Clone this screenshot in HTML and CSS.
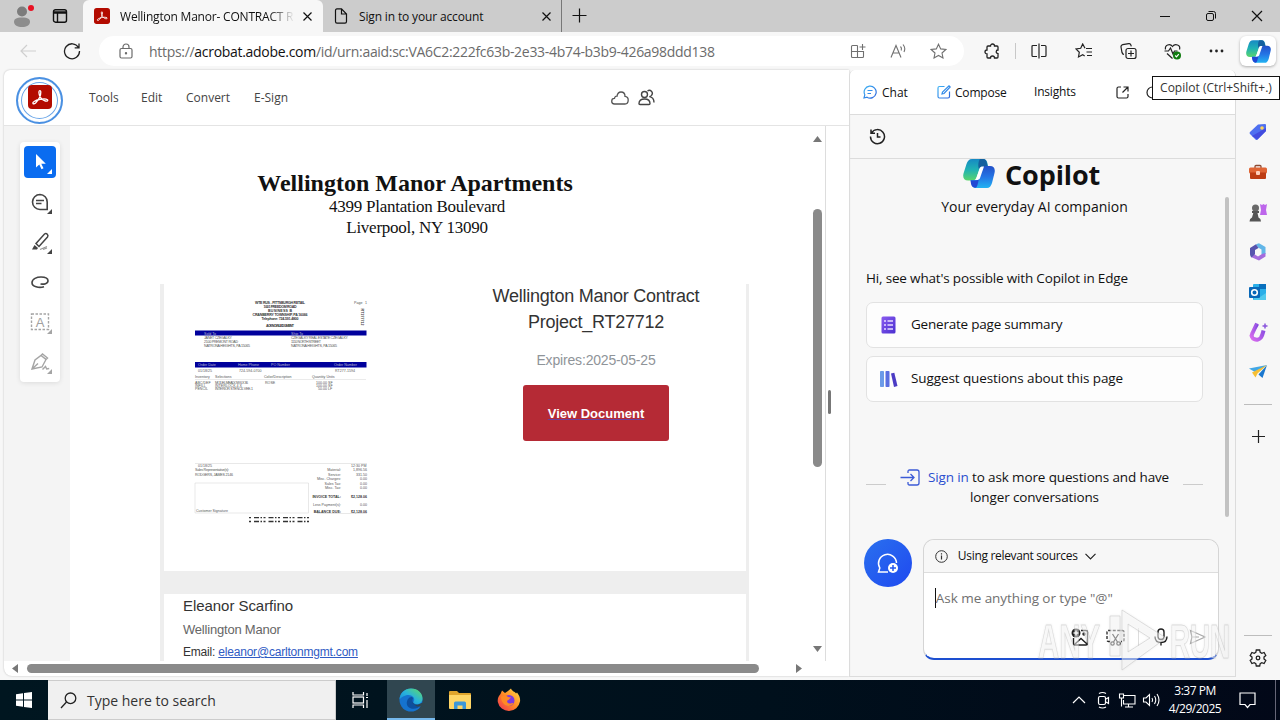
FILE: index.html
```
<!DOCTYPE html>
<html lang="en">

<head>
    <meta charset="UTF-8">
    <meta name="viewport" content="width=device-width, initial-scale=1.0">
    <title>Wellington Manor- CONTRACT</title>
    <link rel="stylesheet" href="styles.css">
</head>

<body>
    <!-- shared gradients and the copilot mark -->
    <svg width="0" height="0" class="defs">
        <defs>
            <linearGradient id="cpA" x1="0" y1="0" x2="0" y2="1">
                <stop offset="0" stop-color="#1689c4" />
                <stop offset=".5" stop-color="#20b2b4" />
                <stop offset="1" stop-color="#5ad56c" />
            </linearGradient>
            <linearGradient id="cpB" x1="0" y1="0" x2="0" y2="1">
                <stop offset="0" stop-color="#2350c8" />
                <stop offset=".5" stop-color="#2475e5" />
                <stop offset="1" stop-color="#23b3f2" />
            </linearGradient>
            <linearGradient id="purple" x1="0" y1="0" x2="1" y2="1">
                <stop offset="0" stop-color="#8b5cf0" />
                <stop offset="1" stop-color="#4a2fd0" />
            </linearGradient>
            <linearGradient id="blue" x1="0" y1="0" x2="1" y2="1">
                <stop offset="0" stop-color="#3fb4f4" />
                <stop offset="1" stop-color="#2b62dc" />
            </linearGradient>
            <linearGradient id="edge" x1="0" y1="1" x2="1" y2="0">
                <stop offset="0" stop-color="#1480d8" />
                <stop offset=".5" stop-color="#28b3dc" />
                <stop offset="1" stop-color="#62dc62" />
            </linearGradient>
            <linearGradient id="fox" x1="1" y1="0" x2="0" y2="1">
                <stop offset="0" stop-color="#ffe04a" />
                <stop offset=".5" stop-color="#ff8a25" />
                <stop offset="1" stop-color="#f02c56" />
            </linearGradient>
            <linearGradient id="pink" x1="0" y1="1" x2="1" y2="0">
                <stop offset="0" stop-color="#d86bee" />
                <stop offset="1" stop-color="#7a48de" />
            </linearGradient>
        </defs>
        <symbol id="copilot" viewBox="0 0 32 29">
            <path d="M9 0h11c3 0 4 2 4.500 4.500L25 8h-5c-2 0-3 1-3.600 3l-3 7.500C12.500 21 11 21.500 9 21.500H5c-4 0-5.500-3-4.500-7L3.500 5C4.500 2 6 0 9 0z" fill="url(#cpA)" />
            <path d="M17 0h3c2.500 0 3.500 2 4 4.500L25 8h-5c-2 0-3 .5-4 2.500-1-3-1-8 1-10.500z" fill="#14609e" />
            <path d="M24 29H13c-3 0-4-2-4.500-4.500L7.500 21h5c2 0 3-1 3.600-3l3-8.500C20 7.500 21.500 7 23.500 7H27c4 0 5.500 3 4.500 7L29 24c-.9 3-2.500 5-5 5z" fill="url(#cpB)" />
            <path d="M7.500 21.500h5c2 0 3-1 3.600-3L15 24c-.6 3-1.500 5-3 4.800-2.500-.3-3.600-2-4-4z" fill="#2048d4" />
            <path d="M13 20.500l3.500-11c.6-1.600 1.500-2 3.500-2h1l-4 11.500c-.6 1.600-1.500 2-4 2z" fill="#fff" />
        </symbol>
        <symbol id="acro" viewBox="0 0 24 24">
            <rect width="24" height="24" rx="4" fill="#b30b00" />
            <path d="M5 18.500c-1-1.500 3-3.300 6-4s7-1 8.500.2c1 1.200-1 2-3 1-3-1.500-5.500-4.500-5.600-8.500 0-2 1.800-2.300 1.900-.2.100 3.500-2.500 8-4.600 10.300-1 1.200-2.600 2-3.200 1.200z" fill="none" stroke="#fff" stroke-width="1.300" />
        </symbol>
    </svg>

    <div class="tabs">
        <div class="tabs-left">
            <svg class="avatar" width="26" height="26" viewBox="0 0 26 26"><circle cx="12" cy="8.500" r="5" fill="#7c7c7c" /><path d="M4 19c0-3 2-4.500 8-4.500s8 1.500 8 4.500c0 3-3.500 5-8 5s-8-2-8-5z" fill="#8d8d8d" /><circle cx="21" cy="5" r="3" fill="#e81123" /></svg>
            <svg width="16" height="16" viewBox="0 0 16 16" fill="none" stroke="#111" stroke-width="1.400"><rect x="1.500" y="1.700" width="13" height="12.500" rx="2" /><path d="M1.500 4.500h13" stroke-width="2.500" /><path d="M5.500 5v9" /></svg>
        </div>
        <div class="tab active">
            <svg width="16" height="16"><use href="#acro" /></svg>
            <span class="tab-name fade">Wellington Manor- CONTRACT R</span>
            <svg width="9" height="9" viewBox="0 0 9 9" stroke="#111" stroke-width="1.200"><path d="M.5.5l8 8M8.500.5l-8 8" /></svg>
        </div>
        <div class="tab">
            <svg width="16" height="16" viewBox="0 0 16 16" fill="none" stroke="#111" stroke-width="1.200"><path d="M4 .8h4.500L13.500 6v7.500c0 1-.5 1.600-1.500 1.600H4c-1 0-1.500-.6-1.500-1.600v-11c0-1 .5-1.700 1.500-1.700zM8.500 1v5h5" /></svg>
            <span class="tab-name second">Sign in to your account</span>
            <svg width="9" height="9" viewBox="0 0 9 9" stroke="#111" stroke-width="1.200"><path d="M.5.5l8 8M8.500.5l-8 8" /></svg>
        </div>
        <div class="new-tab"><svg width="15" height="15" viewBox="0 0 15 15" stroke="#111" stroke-width="1.200"><path d="M7.500.5v14M.5 7.500h14" /></svg></div>
        <div class="win">
            <svg width="46" height="32" viewBox="0 0 46 32" stroke="#111" fill="none"><path d="M18 16.500h10" /></svg>
            <svg width="46" height="32" viewBox="0 0 46 32" stroke="#111" fill="none"><rect x="18.500" y="13.500" width="7" height="7" rx="1.500" /><path d="M20.500 11.500h5q2 0 2 2v5" /></svg>
            <svg width="46" height="32" viewBox="0 0 46 32" stroke="#111" fill="none" stroke-width="1.200"><path d="M18 11l10 10M28 11L18 21" /></svg>
        </div>
    </div>

    <div class="toolbar">
        <div class="cell w56"><svg width="16" height="14" viewBox="0 0 16 14" fill="none" stroke="#cfcfcf" stroke-width="1.200"><path d="M16 7H1M7 1L1 7l6 6" /></svg></div>
        <div class="cell w43"><svg width="18" height="18" viewBox="0 0 18 18" fill="none" stroke="#222" stroke-width="1.300"><path d="M15.500 5.500A7.500 7.500 0 1 0 16.500 9M16 1.500v4.300h-4.300" /></svg></div>
        <div class="address">
            <svg width="14" height="16" viewBox="0 0 14 16" fill="none" stroke="#6b6b6b" stroke-width="1.200"><rect x="1" y="5.500" width="12" height="9.500" rx="1.500" /><path d="M4 5.500V4a3 3 0 0 1 6 0v1.500" /><circle cx="7" cy="10.300" r=".6" fill="#555" /></svg>
            <span class="url">https://<b>acrobat.adobe.com</b>/id/urn:aaid:sc:VA6C2:222fc63b-2e33-4b74-b3b9-426a98ddd138</span>
            <div class="cell w40"><svg width="16" height="16" viewBox="0 0 16 16" fill="none" stroke="#707070" stroke-width="1.100"><path d="M7.500 2.500h-5q-1 0-1 1v10q0 1 1 1h10q1 0 1-1V8.500H1.500M7.500 2.500v12M12.500 1v6M9.500 4h6" /></svg></div>
            <div class="cell w40"><svg width="17" height="16" viewBox="0 0 17 16" fill="none" stroke="#707070" stroke-width="1.100"><path d="M1 14.500L6 2.500l5 12M2.800 10h6.400M10.500 3.500q1.500 1.500.7 4M13 1.500q3 3.500 1 7.500" /></svg></div>
            <div class="cell w40"><svg width="17" height="17" viewBox="0 0 17 17" fill="none" stroke="#707070" stroke-width="1.100"><path d="M8.500 1.200l2.200 4.700 5.100.6-3.800 3.500 1 5-4.500-2.500L4 15l1-5L1.200 6.500l5.100-.6z" /></svg></div>
        </div>
        <div class="cell w44"><svg width="17" height="17" viewBox="0 0 17 17" fill="none" stroke="#222" stroke-width="1.300"><path d="M4 3h2.500a2 2 0 0 1 4 0H13q1 0 1 1v3a1.800 1.800 0 0 0 0 3.600V14q0 1-1 1h-2.500a2 2 0 0 0-4 0H4q-1 0-1-1v-3a2 2 0 1 1 0-4V4q0-1 1-1z" /></svg></div>
        <div class="tb-line"></div>
        <div class="cell w45"><svg width="16" height="16" viewBox="0 0 16 16" fill="none" stroke="#222" stroke-width="1.200"><path d="M8 .5v15M6 2.500H2q-1 0-1 1v9q0 1 1 1h4M10 2.500h4q1 0 1 1v9q0 1-1 1h-4" /></svg></div>
        <div class="cell w45"><svg width="18" height="16" viewBox="0 0 18 16" fill="none" stroke="#222" stroke-width="1.200"><path d="M10 5.300L7.700 1 5.700 5.300 1 6l3.300 3.300L3.500 14l4.200-2.200 2 1.200M11 5.500h6M11.500 9h5.500M12 12.500h5" /></svg></div>
        <div class="cell w45"><svg width="17" height="17" viewBox="0 0 17 17" fill="none" stroke="#222" stroke-width="1.200"><rect x="6" y="5.500" width="10" height="10" rx="2" /><path d="M11 7.500v6M8 10.500h6M4 11.500q-1.500-.3-2-2L1 4q-.2-2 1.700-2.400l6-1q2-.2 2.300 1.700l.3 1" /></svg></div>
        <div class="cell w45"><svg width="18" height="17" viewBox="0 0 18 17" fill="none" stroke="#222" stroke-width="1.200"><path d="M1.500 6.500C.5 2 6 0 8.500 3.500 11 0 17 2 15.500 6.500M.5 8h4l2-3 2.500 6 1.500-3h3M3 10.500l5.500 5" /><circle cx="13" cy="12.500" r="4" fill="#107c10" stroke="none" /><path d="M11.200 12.500l1.300 1.300 2.300-2.600" stroke="#fff" /></svg></div>
        <div class="cell w41"><svg width="16" height="4" fill="#222"><circle cx="3" cy="2" r="1.400" /><circle cx="8.500" cy="2" r="1.400" /><circle cx="14" cy="2" r="1.400" /></svg></div>
        <div class="copilot-btn"><svg width="25" height="23"><use href="#copilot" /></svg></div>
        <div class="tooltip">Copilot (Ctrl+Shift+.)</div>
    </div>

    <div class="main">
        <div class="page">
            <div class="page-head">
                <div class="logo"><svg width="24" height="24"><use href="#acro" /></svg></div>
                <span class="m1">Tools</span>
                <span class="m2">Edit</span>
                <span class="m3">Convert</span>
                <span class="m4">E-Sign</span>
                <div class="share">
                    <svg width="18" height="14" viewBox="0 0 18 14" fill="none" stroke="#555" stroke-width="1.300"><path d="M3.500 13a2.800 2.800 0 0 1 0-5.600C3.800 5.500 5 5 6 5.200 6.500 2 8 1 10 1c2.500 0 4 2 4 4.300 2 .2 3.200 1.700 3.200 3.700 0 2.500-1.200 4-3.200 4z" /></svg>
                    <svg width="17" height="17" viewBox="0 0 17 17" fill="none" stroke="#444" stroke-width="1.400"><circle cx="6.500" cy="5.500" r="3" /><path d="M1 14.500c0-3 2-4.500 5.500-4.500s5.500 1.500 5.500 4.500q0 1-1 1H2q-1 0-1-1zM9.500 2c3-2 6 1.500 4.300 4-.6 1-1.500 1.500-2.500 1.600 3 .4 4.700 2.500 4.700 5.900" /></svg>
                </div>
            </div>
            <div class="viewer">
                <div class="rail">
                    <div class="tools">
                        <div class="tool on"><svg width="32" height="32" viewBox="0 0 32 32"><path d="M12 8v13.500l3.300-3 2.200 4.700 2-1-2.200-4.500h4.500z" fill="#fff" /><path d="M28 23v5h-5z" fill="#fff" /></svg></div>
                        <div class="tool"><svg width="32" height="32" viewBox="0 0 32 32" fill="none" stroke="#444" stroke-width="1.600"><path d="M16 8.500a7.500 7.500 0 1 0 0 15h7.200V16A7.300 7.300 0 0 0 16 8.500zM12 14.500h8M12 17.500h5.500" /><path d="M28 23v5h-5z" fill="#444" stroke="none" /></svg></div>
                        <div class="tool"><svg width="32" height="32" viewBox="0 0 32 32" fill="none" stroke="#444" stroke-width="1.500"><path d="M12 17.500L20.500 8q1.500-1 2.800.2 1.200 1.300.2 2.800L15 20.500z" /><path d="M10.500 19l3.500 3-1 1.500H8z" fill="#444" stroke="none" /><path d="M16 23.500l7-3M19 23.500l4-1.500" stroke="#999" stroke-width="1.300" /><path d="M28 23v5h-5z" fill="#444" stroke="none" /></svg></div>
                        <div class="tool"><svg width="32" height="32" viewBox="0 0 32 32" fill="none" stroke="#444" stroke-width="1.600"><path d="M20 20.800c-5 1.500-12 0-12-4.100 0-4 5-5.700 9-5.700 5 0 7 1.700 7 3.700 0 3-4 3.800-7.500 3.300" /></svg></div>
                        <div class="tool"><svg width="32" height="32" viewBox="0 0 32 32" fill="none" stroke="#a5a5a5" stroke-width="1.400"><rect x="7.500" y="8" width="17" height="15.500" stroke-dasharray="2.500 1.500" /><text x="16" y="20.500" text-anchor="middle" fill="#a0a0a0" stroke="none">A</text><path d="M28 23v5h-5z" fill="#a5a5a5" stroke="none" /></svg></div>
                        <div class="tool"><svg width="32" height="32" viewBox="0 0 32 32" fill="none" stroke="#a5a5a5" stroke-width="1.400"><path d="M8 23l3-9 6-4.500 5 4-4 7.500zM8 23l6-5.500M17 9.500L18.500 8l5 4-1.500 1.500M18.500 23.500l3-3 1.200 2.500 2.500-.5" /><path d="M28 23v5h-5z" fill="#a5a5a5" stroke="none" /></svg></div>
                    </div>
                </div>
                <div class="doc">
                    <div class="letterhead">
                        <h1>Wellington Manor Apartments</h1>
                        <p>4399 Plantation Boulevard</p>
                        <p>Liverpool, NY 13090</p>
                    </div>
                    <div class="sheet">
                        <!-- invoice thumbnail, coordinates are in page pixels from (164,284) -->
                        <svg class="invoice" width="250" height="286" viewBox="164 284 250 286">
                            <g class="bold" text-anchor="middle">
                                <text x="280" y="303.500" textLength="50">WTE RUS - PITTSBURGH RETAIL</text>
                                <text x="280" y="307.500" textLength="33">1001 FREEDOM ROAD</text>
                                <text x="280" y="311.500" textLength="24">BUSINESS B</text>
                                <text x="280" y="315.500" textLength="55">CRANBERRY TOWNSHIP, PA 16066</text>
                                <text x="280" y="319.500" textLength="37">Telephone: 724-591-4800</text>
                                <text x="280" y="326.500" textLength="28">ACKNOWLEDGMENT</text>
                                <text transform="translate(361 317) rotate(90)">RT277712</text>
                            </g>
                            <text x="354" y="304">Page</text><text x="365" y="304">1</text>
                            <path d="M195 330.500h171.500v5H195zM195 362h171.500v5.500H195z" fill="#00009c" />
                            <g class="light">
                                <text x="204" y="334.500">Sold To</text><text x="291" y="334.500">Ship To</text>
                                <text x="198" y="366.300">Order Date</text><text x="238" y="366.300">Home Phone</text><text x="271" y="366.300">PO Number</text><text x="334" y="366.300">Order Number</text>
                            </g>
                            <text x="204" y="339" textLength="28">JANET CZEGALKY</text>
                            <text x="204" y="342.500" textLength="34">2100 PREMONT ROAD</text>
                            <text x="204" y="346.500" textLength="46">NATRONA HEIGHTS, PA 15065</text>
                            <text x="291" y="339" textLength="57">CZEGALKY REAL ESTATE CZEGALKY</text>
                            <text x="291" y="342.500" textLength="30">1110 NORTH STREET</text>
                            <text x="291" y="346.500" textLength="46">NATRONA HEIGHTS, PA 15065</text>
                            <text x="198" y="371.500">01/18/25</text><text x="239" y="371.500">724-594-0700</text><text x="335" y="371.500">RT277-1594</text>
                            <text x="195" y="378">Inventory</text><text x="215" y="378">Selections</text><text x="264" y="378">Color/Description</text><text x="312" y="378">Quantity Units</text>
                            <path d="M195 379.500h171" stroke="#ccc" stroke-width=".4" />
                            <text x="195" y="383.500">ABC/DEF</text><text x="215" y="383.500" textLength="33">MODEL MEADOW 6 X 36</text><text x="265" y="383.500">ROSE</text><text x="316" y="383.500">100.00 SF</text>
                            <text x="195" y="387">INFILL</text><text x="215" y="387">INTERLOCK 4 X</text><text x="316" y="387">100.00 SF</text>
                            <text x="195" y="390">PENCIL</text><text x="215" y="390" textLength="38">INTERIOR STENCIL VEE-1</text><text x="318" y="390">50.00 LF</text>
                            <path d="M195 463.500h172M195 483h113.500v30H195zM317 513.500h50" fill="none" stroke="#d0d0d0" stroke-width=".5" />
                            <text x="198" y="466.500">01/18/25</text><text x="351" y="466.500">12:30 PM</text>
                            <text x="195" y="471" textLength="34">Sales Representative(s):</text>
                            <text x="195" y="475.800" textLength="38">RODGERS, JAMES 2146</text>
                            <g text-anchor="end">
                                <text x="341" y="471">Material:</text><text x="367" y="471">1,896.56</text>
                                <text x="341" y="475.500">Service:</text><text x="367" y="475.500">331.50</text>
                                <text x="341" y="480">Misc. Charges:</text><text x="367" y="480">0.00</text>
                                <text x="341" y="484.500">Sales Tax:</text><text x="367" y="484.500">0.00</text>
                                <text x="341" y="489">Misc. Tax:</text><text x="367" y="489">0.00</text>
                                <text x="341" y="505.500">Less Payment(s):</text><text x="367" y="505.500">0.00</text>
                                <g class="bold"><text x="341" y="498">INVOICE TOTAL:</text><text x="367" y="498">$2,128.06</text><text x="341" y="512.500">BALANCE DUE:</text><text x="367" y="512.500">$2,128.06</text></g>
                            </g>
                            <text x="196" y="511.500">Customer Signature</text>
                            <path d="M249 517.700h61M249 521.500h61" stroke="#333" stroke-width="1.300" stroke-dasharray="2 3 5 1.500 1.500 1.500" />
                        </svg>
                        <div class="offer">
                            <h2>Wellington Manor Contract Project_RT27712</h2>
                            <p>Expires:2025-05-25</p>
                            <a>View Document</a>
                        </div>
                    </div>
                    <div class="contact">
                        <p class="name">Eleanor Scarfino</p>
                        <p class="org">Wellington Manor</p>
                        <p class="mail">Email: <a>eleanor@carltonmgmt.com</a></p>
                    </div>
                </div>
                <div class="vscroll">
                    <svg width="9" height="6"><path d="M0 6L4.500 0 9 6z" fill="#777" /></svg>
                    <div class="vthumb"></div>
                    <svg width="9" height="6"><path d="M0 0l4.500 6L9 0z" fill="#777" /></svg>
                </div>
                <div class="grip"></div>
            </div>
            <div class="hscroll">
                <svg width="6" height="9"><path d="M6 0L0 4.500 6 9z" fill="#777" /></svg>
                <div class="hthumb"></div>
                <svg width="6" height="9"><path d="M0 0l6 4.500L0 9z" fill="#777" /></svg>
            </div>
        </div>

        <div class="panel">
            <div class="panel-tabs">
                <svg width="14" height="14" viewBox="0 0 14 14" fill="none" stroke="url(#blue)" stroke-width="1.200"><path d="M1 13l.8-3.200A6 6 0 1 1 4 12.200zM4.500 5.500h5M4.500 8.500h3.500" /></svg>
                <span class="p1">Chat</span>
                <svg width="14" height="14" viewBox="0 0 14 14" fill="none" stroke="url(#blue)" stroke-width="1.200"><path d="M7.500 1.500h-5q-1.500 0-1.500 1.500v8.500q0 1.500 1.500 1.500H11q1.500 0 1.500-1.500v-5M5 9l.5-2L12 .8l1.200 1.200L7 8.500z" /></svg>
                <span class="p2">Compose</span>
                <span class="p3">Insights</span>
                <svg class="p4" width="13" height="13" viewBox="0 0 13 13" fill="none" stroke="#222" stroke-width="1.200"><path d="M5 1H2.500Q1 1 1 2.500v8Q1 12 2.500 12h8q1.500 0 1.500-1.500V8M7.500 1H12v4.500M12 1L6.500 6.500" /></svg>
                <svg class="p5" width="13" height="13" viewBox="0 0 13 13" fill="none" stroke="#222" stroke-width="1.200"><circle cx="6.500" cy="6.500" r="5.500" /></svg>
            </div>
            <div class="history"><svg width="17" height="17" viewBox="0 0 17 17" fill="none" stroke="#222" stroke-width="1.500"><path d="M2.500 5A7 7 0 1 1 1.500 8.500M2 1.500V5.300h4M8.500 5v4h3" /></svg></div>
            <div class="panel-body">
                <div class="brand"><svg width="32" height="29"><use href="#copilot" /></svg><b>Copilot</b></div>
                <p class="slogan">Your everyday AI companion</p>
                <p class="hi">Hi, see what's possible with Copilot in Edge</p>
                <div class="card">
                    <svg width="20" height="20" viewBox="0 0 20 20"><rect x="2.500" y="1.500" width="14" height="17" rx="1.500" fill="url(#purple)" /><path d="M5 6h2M8.500 6H14M5 10h2M8.500 10H14M5 14h2M8.500 14H14" stroke="#e6dcff" stroke-width="1.400" /></svg>
                    <span class="c1">Generate page summary</span>
                </div>
                <div class="card">
                    <svg width="20" height="20" viewBox="0 0 20 20"><rect x="1" y="2" width="4" height="16" rx=".8" fill="#6b9ae8" /><rect x="6.500" y="2" width="4" height="16" rx=".8" fill="#5a6ee0" /><path d="M12 4.500l3.300-.8L18.500 17l-3.500 1z" fill="#4b3bc4" /></svg>
                    <span class="c2">Suggest questions about this page</span>
                </div>
                <div class="signin">
                    <i></i>
                    <p><svg width="20" height="17" viewBox="0 0 20 17" fill="none" stroke="#3c5bd6" stroke-width="1.300"><path d="M8 4V2.500Q8 1 9.500 1H17q2 0 2 2v11q0 2-2 2H9.500Q8 16 8 14.500V13M.5 8.500H14M10.500 5l3.500 3.500L10.500 12" /></svg><a>Sign in</a> to ask more questions and have<br><span>longer conversations</span></p>
                    <i></i>
                </div>
                <div class="ask">
                    <div class="new-chat"><svg width="24" height="24" viewBox="0 0 24 24" fill="none" stroke="#fff" stroke-width="1.500"><path d="M12 21H2.500l1.300-4A9 9 0 1 1 20.500 12" /><circle cx="17" cy="17" r="5" fill="#fff" stroke="none" /><path d="M17 14v6M14 17h6" stroke="#2458ee" /></svg></div>
                    <div class="box">
                        <div class="source">
                            <svg width="13" height="13" viewBox="0 0 13 13" fill="none" stroke="#333"><circle cx="6.500" cy="6.500" r="5.800" /><path d="M6.500 5.500v4M6.500 3.300v1.200" stroke-width="1.200" /></svg>
                            <span>Using relevant sources</span>
                            <svg width="11" height="7" viewBox="0 0 11 7" fill="none" stroke="#222" stroke-width="1.200"><path d="M.5.800l5 5 5-5" /></svg>
                        </div>
                        <p class="placeholder">Ask me anything or type "@"</p>
                        <div class="box-icons">
                            <svg width="18" height="18" viewBox="0 0 18 18" fill="none" stroke="#222" stroke-width="1.400"><path d="M10 2.500h5q1.500 0 1.500 1.500v11.500q0 1.500-1.500 1.500H4q-1.500 0-1.500-1.500V10M4 16l6-5.500 6 5.500" /><circle cx="5" cy="5" r="4.500" fill="#222" stroke="none" /><path d="M5 2.500v5M2.500 5h5" stroke="#fff" /><circle cx="13" cy="6" r="1" /></svg>
                            <svg class="b2" width="19" height="18" viewBox="0 0 19 18" fill="none" stroke="#222" stroke-width="1.300"><path d="M4 13.500H2.500Q1 13.500 1 12V4q0-1.500 1.500-1.500h14Q18 2.500 18 4v8q0 1.500-1.500 1.500H15" stroke-dasharray="3 1.500" /><path d="M6.500 6l5 8M12.500 6l-5 8" /><circle cx="6.500" cy="15.500" r="1.700" /><circle cx="12.500" cy="15.500" r="1.700" /></svg>
                            <i></i>
                            <svg class="b3" width="14" height="18" viewBox="0 0 14 18" fill="none" stroke="#222" stroke-width="1.400"><rect x="4" y="1" width="6" height="10.500" rx="3" /><path d="M1 8.500q0 6 6 6t6-6M7 14.500v3" /></svg>
                            <svg class="b4" width="17" height="16" viewBox="0 0 17 16" fill="none" stroke="#aaa" stroke-width="1.200"><path d="M1.500 1.500L16 8 1.500 14.500 3 8zM3 8h7" /></svg>
                        </div>
                    </div>
                </div>
                <div class="panel-thumb"></div>
            </div>
        </div>

        <div class="side">
            <svg width="18" height="18" viewBox="0 0 18 18"><path d="M9 1.500L16 1q1 0 1 1v6L8.500 16.500q-1 1-2 0L1 11q-1-1 0-2z" fill="#4e6ff0" /><path d="M3 13l5.500 3.500L17 8v-3z" fill="#424cdf" /><circle cx="13" cy="5" r="1.800" fill="#ffd35a" /></svg>
            <svg width="18" height="18" viewBox="0 0 18 18"><path d="M6 5V3.500Q6 2.500 7 2.500h4q1 0 1 1V5" fill="none" stroke="#8f4a32" stroke-width="1.300" /><rect y="4.500" width="18" height="6" rx="1.500" fill="#df6535" /><path d="M1 9.500h16V15q0 1-1 1H2q-1 0-1-1z" fill="#bd3d14" /><rect x="7" y="8" width="4" height="4" rx="1" fill="#ffd0bd" /></svg>
            <svg width="20" height="20" viewBox="0 0 20 20"><path d="M12 2l2 1 1.500-1L17 3l2-1-1 6 1 5h-7l1-5z" fill="#bd66eb" /><circle cx="7.500" cy="6" r="3.500" fill="#696969" /><path d="M4 9h7v2H9.500l1 4.500q2.500 1 2.500 4H1.500q0-3 2.500-4l1.300-4.500H4z" fill="#555" /></svg>
            <svg width="18" height="18" viewBox="0 0 18 18"><path d="M7 1.200L10 .3 16.500 4v7l-4 .5V6.500L9 4.500z" fill="#62b6e8" /><path d="M16.500 10v3.500L10 17.500 2 14l3-3 4 2.500 4-2.500z" fill="#a46cdd" /><path d="M7 1.200L9.500 5 6 7v4l-3.500 3.500Q1 13 1 11V5z" fill="#5754ae" /></svg>
            <svg width="18" height="18" viewBox="0 0 18 18"><rect x="4" y="1" width="13" height="16" rx="1" fill="#2aaee8" /><path d="M10 1h7v5h-7z" fill="#0a70bd" /><path d="M5 10l6 4 6-4v7H5z" fill="#51c9ed" /><rect x="0" y="4" width="11" height="11" rx="1" fill="#0968b8" /><circle cx="5.500" cy="9.500" r="2.800" fill="none" stroke="#fff" stroke-width="1.600" /></svg>
            <svg width="20" height="20" viewBox="0 0 20 20" fill="none" stroke="url(#pink)"><path d="M9 1.500L4.500 11C1 17 10 20 13 15.500c1.500-2.500 2-5 2.500-7" stroke-width="4" /><path d="M2 14.500L10 3" stroke-width="1.500" /><path d="M17 1.500v5M14.500 4h5" stroke="#8a56dc" stroke-width="1.500" /></svg>
            <svg width="18" height="18" viewBox="0 0 18 18"><path d="M0 5.500L18 2 7.500 10z" fill="#42a7e5" /><path d="M18 2l-4.500 13-4-3.500z" fill="#1b78cf" /><path d="M18 2L3 9.500l3.500 5 2-4z" fill="#f6bf35" /></svg>
            <hr>
            <svg class="plus" width="13" height="13" viewBox="0 0 13 13" stroke="#222" stroke-width="1.200"><path d="M6.500 0v13M0 6.500h13" /></svg>
            <hr class="low">
            <svg class="gear" width="18" height="18" viewBox="0 0 18 18" fill="none" stroke="#222" stroke-width="1.300"><path d="M7.300 1h3.400l.5 2.400 1.600.9 2.300-.8 1.700 3-1.800 1.600v1.800l1.800 1.600-1.700 3-2.300-.8-1.600.9-.5 2.400H7.300l-.5-2.400-1.600-.9-2.300.8-1.700-3L3 9.900V8.100L1.200 6.500l1.700-3 2.300.8 1.600-.9z" /><circle cx="9" cy="9" r="1.800" /></svg>
        </div>

        <svg class="mark" width="210" height="68" viewBox="0 0 210 68">
            <g fill="#fff" fill-opacity=".5" stroke="#bbb" stroke-opacity=".45">
                <text x="2" y="51" textLength="62" lengthAdjust="spacingAndGlyphs">ANY</text>
                <text x="134" y="51" textLength="60" lengthAdjust="spacingAndGlyphs">RUN</text>
                <path d="M74 9h10v40H74zM86 3l44 28-44 32zM92 17v28l22-14z" fill-rule="evenodd" />
            </g>
        </svg>
    </div>

    <div class="taskbar">
        <div class="start"><svg width="16" height="16" viewBox="0 0 16 16" fill="#fff"><path d="M0 2.200L7 1.200v6.300H0zM8 1l8-1v7.500H8zM0 8.500h7v6.300l-7-1zM8 8.500h8V16l-8-1z" /></svg></div>
        <div class="search">
            <svg width="17" height="17" viewBox="0 0 17 17" fill="none" stroke="#222" stroke-width="1.300"><circle cx="10.500" cy="6.300" r="5.300" /><path d="M6.500 10L1 16" /></svg>
            <span>Type here to search</span>
        </div>
        <div class="app view"><svg width="17" height="16" viewBox="0 0 17 16" fill="none" stroke="#fff" stroke-width="1.200"><path d="M1 0v3h10.500V0M1 16v-3h10.500v3" /><rect x="1" y="5" width="10.500" height="6" /><path d="M15 1v3M15 8v8M14 5.500h2" /></svg></div>
        <div class="app open"><svg width="24" height="24" viewBox="0 0 24 24"><circle cx="12" cy="12" r="11.500" fill="#1573cf" /><path d="M.5 11.500C1 4.500 6 .5 12 .5c7 0 12 5 11.500 10.500-.3 4-4 5.500-7 5.500-2 0-3-1-2-2.500 2.500-4-1.500-7-5-7-4 0-7.500 2.500-9 4.500z" fill="url(#edge)" /><path d="M14 10.500c-2 4.500 3 7.500 8.200 5.500-2.500 5-8.500 6-12.200 3.500-3.500-2.500-2.500-8 .5-10 2-1 3.500-.5 3.500 1z" fill="#0d4f9e" /><path d="M13.800 14.200c-.6 1.500.6 2.700 3 2.500 2.500 0 4.200-.8 5.500-1.800l1.700 0-1 3c-3.500 1.500-8.700-.2-9.200-3.700z" fill="#304650" /></svg></div>
        <div class="app"><svg width="22" height="18" viewBox="0 0 22 18"><path d="M0 1q0-1 1-1h7l2 2h11q1 0 1 1v14H0z" fill="#e0a52c" /><path d="M0 4h22v13q0 1-1 1H1q-1 0-1-1z" fill="#ffd666" /><path d="M5 18v-6q0-1.500 1.500-1.500h9Q17 10.500 17 12v6h-3.500v-3.500h-5V18z" fill="#3d97d8" /></svg></div>
        <div class="app"><svg width="24" height="24" viewBox="0 0 24 24"><path d="M3.500 6L5 2.500 8 5l3-2 3-2.500c1 3 4 3 5 5l1-1c2.500 3 3.500 6 3 9A11.300 11.300 0 0 1 .8 14c-.4-3 .7-6 2.700-8z" fill="url(#fox)" /><circle cx="12" cy="12.500" r="5.500" fill="#7b3ae0" /><path d="M4 9c3-2 6-1 7 0l3 .5-2.500 2.500c-2 .5-2 3 1 3.500 2 .3 3-1 4-.5-1 3-6 4-8.500 2S4 12 4 9z" fill="#ff8a25" /></svg></div>
        <div class="tray">
            <svg width="24" height="20" viewBox="0 0 24 20" fill="none" stroke="#fff" stroke-width="1.200"><path d="M6 13l6-6 6 6" /></svg>
            <svg width="24" height="20" viewBox="0 0 24 20" fill="none" stroke="#fff" stroke-width="1.200"><rect x="7.500" y="6.500" width="7" height="8" rx="1.500" /><path d="M15 9l2.500-1.500v6L15 12M8 3.500q3.500-2 7 0M8 17q3.500 2 7 0" /></svg>
            <svg width="24" height="20" viewBox="0 0 24 20" fill="none" stroke="#fff" stroke-width="1.100"><path d="M9 5.500h11v8.500H8.500V10M13.500 14v3M10 17h8M4.500 4h4v4h-4zM6.500 8v8.500" /></svg>
            <svg width="24" height="20" viewBox="0 0 24 20" fill="none" stroke="#fff" stroke-width="1.100"><path d="M4.500 8h2.500l3.500-3.500v11L7 12H4.500zM13 8q1.300 2 0 4M15.500 6q2.500 4 0 8M18 4q4 6 0 12" /></svg>
            <div class="clock">3:37 PM<br>4/29/2025</div>
            <svg class="note" width="17" height="17" viewBox="0 0 17 17" fill="none" stroke="#fff" stroke-width="1.200"><path d="M1 1h15v11.500h-5L8.500 15.500 6 12.500H1z" /></svg>
        </div>
    </div>
</body>

</html>
```
FILE: styles.css
```
body {
    margin: 0;
    width: 1280px;
    height: 720px;
    overflow: hidden;
    display: flex;
    flex-direction: column;
    background-color: #f7f7f7;
    font-family: "Open Sans", "Noto Sans", sans-serif;
    color: #111;
}

h1, h2, p {
    margin: 0;
    font-weight: normal;
}

svg {
    display: block;
    flex: none;
}

span, a {
    white-space: nowrap;
}

.defs {
    position: absolute;
}

/* tabs */
.tabs {
    height: 32px;
    flex: none;
    display: flex;
    background-color: #ccc;
}

.tabs-left {
    width: 83px;
    display: flex;
    align-items: center;
    box-sizing: border-box;
    padding-left: 10px;
}

.avatar {
    margin-right: 16px;
}

.tab {
    width: 239px;
    display: flex;
    align-items: center;
    box-sizing: border-box;
    padding: 0 10px 0 10px;
    border-right: 1px solid #777;
    font-size: 12px;
}

.tab.active {
    width: 240px;
    padding: 0 11px;
    background-color: #f7f7f7;
    border-radius: 6px 6px 0 0;
    border-right: 0;
}

.tab-name {
    flex: 1;
    overflow: hidden;
    margin: 0 8px 0 10px;
    letter-spacing: -0.2px;
}

.tab-name.second {
    letter-spacing: -0.15px;
}

.fade {
    -webkit-mask-image: linear-gradient(to right, #000 85%, transparent);
    mask-image: linear-gradient(to right, #000 85%, transparent);
}

.new-tab {
    padding: 8px 0 0 10px;
}

.win {
    margin-left: auto;
    display: flex;
}

/* toolbar */
.toolbar {
    height: 38px;
    flex: none;
    display: flex;
    align-items: center;
    position: relative;
    z-index: 2;
}

.cell {
    flex: none;
    display: flex;
    align-items: center;
    justify-content: center;
}

.w56 { width: 56px; }
.w43 { width: 31px; margin-right: 12px; }
.w40 { width: 40px; }
.w41 { width: 41px; }
.w44 { width: 44px; }
.w45 { width: 44.500px; }

.address {
    width: 865px;
    height: 30px;
    box-sizing: border-box;
    padding: 0 6px 0 20px;
    display: flex;
    align-items: center;
    border-radius: 15px;
    background-color: #fff;
    margin-right: 6px;
}

.url {
    flex: 1;
    margin-left: 16px;
    font-size: 14px;
    letter-spacing: -0.300px;
    color: #6b6b6b;
}

.url b {
    font-weight: normal;
    color: #111;
}

.tb-line {
    width: 1px;
    height: 16px;
    margin: 0 1px;
    background-color: #c8c8c8;
}

.copilot-btn {
    width: 36px;
    height: 30px;
    margin-left: auto;
    margin-right: 4px;
    display: flex;
    align-items: center;
    justify-content: center;
    border-radius: 6px;
    background-color: #fff;
    box-shadow: 0 1px 3px rgba(0, 0, 0, .3);
}

.tooltip {
    position: absolute;
    right: 0;
    top: 44px;
    width: 128px;
    height: 24px;
    box-sizing: border-box;
    border: 1px solid #111;
    background-color: #fff;
    font-size: 12px;
    line-height: 22px;
    text-align: center;
    white-space: nowrap;
    color: #333;
    letter-spacing: 0;
}

/* page */
.main {
    height: 610px;
    flex: none;
    display: flex;
    position: relative;
}

.page {
    width: 845px;
    height: 606px;
    margin-left: 4px;
    display: flex;
    flex-direction: column;
    background-color: #fff;
    border-radius: 6px 0 0 8px;
    box-shadow: 0 0 2px rgba(0, 0, 0, .25);
    overflow: hidden;
}

.page-head {
    height: 55px;
    flex: none;
    display: flex;
    align-items: center;
    border-bottom: 1px solid #e4e4e4;
    font-size: 12px;
    color: #444;
}

.logo {
    width: 47px;
    height: 47px;
    margin: 6px 0 0 12px;
    box-sizing: border-box;
    border: 2px solid #4a90e2;
    border-radius: 50%;
    display: flex;
    justify-content: center;
    padding-top: 6px;
    box-shadow: inset 0 0 0 3px #fff, inset 0 0 0 4px #6ba6e8;
}

.m1 { width: 52px; margin-left: 26px; }
.m2 { width: 45px; }
.m3 { width: 68px; }

.share {
    display: flex;
    align-items: center;
    gap: 9px;
    margin-left: auto;
    margin-right: 194px;
}

.viewer {
    height: 535px;
    flex: none;
    display: flex;
}

.rail {
    width: 66px;
    flex: none;
    background-color: #f4f4f4;
}

.tools {
    width: 32px;
    height: 232px;
    margin: 16px 0 0 16px;
    padding: 4px;
    display: flex;
    flex-direction: column;
    gap: 8px;
    border-radius: 4px;
    background-color: #fff;
    box-shadow: 0 1px 5px rgba(0, 0, 0, .1);
}

.tool.on {
    border-radius: 4px;
    background-color: #0a6cf0;
}

.tool text {
    font: 13px "Liberation Sans", sans-serif;
}

.doc {
    width: 740px;
    flex: none;
    overflow: hidden;
    font-family: "Liberation Sans", Arial, sans-serif;
}

.letterhead {
    width: 588px;
    height: 114px;
    padding-top: 44px;
    margin-left: 51px;
    text-align: center;
    font-family: "Liberation Serif", "Times New Roman", serif;
}

.letterhead h1 {
    font-size: 24px;
    line-height: 27px;
    font-weight: bold;
}

.letterhead p {
    margin-left: 4px;
    font-size: 17px;
    line-height: 20.500px;
    letter-spacing: -0.25px;
}

.sheet {
    width: 582px;
    height: 287px;
    margin-left: 90px;
    border-left: 4px solid #eee;
    border-right: 3px solid #eee;
    display: flex;
}

.invoice {
    font-size: 3.600px;
    fill: #555;
}

.bold {
    font-weight: bold;
    fill: #333;
}

.light {
    fill: #bbc;
}

.offer {
    width: 230px;
    margin-left: 67px;
    margin-top: -1px;
    text-align: center;
}

.offer h2 {
    font-size: 18px;
    line-height: 26px;
    letter-spacing: -0.24px;
    color: #333;
}

.offer p {
    margin-top: 16px;
    font-size: 14px;
    line-height: 18px;
    letter-spacing: -0.17px;
    color: #8f9499;
}

.offer a {
    display: block;
    width: 146px;
    height: 56px;
    margin: 16px auto 0;
    border-radius: 3px;
    background-color: #b52a35;
    color: #fff;
    font-size: 13px;
    font-weight: bold;
    line-height: 57px;
    text-decoration: underline;
    text-decoration-color: #6a3f9c;
}

.contact {
    width: 562px;
    height: 70px;
    margin-left: 90px;
    padding-left: 20px;
    border: solid #eee;
    border-width: 23px 3px 0 4px;
    color: #333;
}

.name {
    margin-left: -1px;
    font-size: 15px;
    line-height: 24px;
    letter-spacing: -0.05px;
}

.org {
    margin-left: -1px;
    font-size: 13px;
    line-height: 24px;
    letter-spacing: -0.2px;
    color: #666;
}

.mail {
    margin-left: -1px;
    font-size: 12px;
    line-height: 20px;
    letter-spacing: -0.2px;
}

.mail a {
    color: #2f5bc4;
    text-decoration: underline;
}

.vscroll {
    width: 16px;
    flex: none;
    display: flex;
    flex-direction: column;
    align-items: center;
    border-right: 1px solid #ddd;
    padding: 10px 0 9px;
    box-sizing: border-box;
}

.vthumb {
    width: 9px;
    height: 258px;
    margin: 67px 0 auto;
    border-radius: 5px;
    background-color: #8a8a8a;
}

.grip {
    width: 3px;
    height: 24px;
    margin: 264px 0 0 2px;
    border-radius: 2px;
    background-color: #777;
}

.hscroll {
    height: 15px;
    display: flex;
    align-items: center;
    padding-left: 8px;
}

.hthumb {
    width: 732px;
    height: 9px;
    margin: 0 37px 0 9px;
    border-radius: 5px;
    background-color: #8a8a8a;
}

/* copilot panel */
.panel {
    width: 385px;
    height: 606px;
    display: flex;
    flex-direction: column;
    border: 1px solid #dcdcdc;
    border-width: 0 1px 1px;
    border-radius: 6px 6px 0 0;
    box-sizing: content-box;
    overflow: hidden;
}

.panel-tabs {
    height: 44px;
    flex: none;
    display: flex;
    align-items: center;
    padding-left: 13px;
    background-color: #fff;
    border-bottom: 1px solid #dcdcdc;
    font-size: 12px;
}

.p1 { width: 55px; margin-left: 5px; }
.p2 { width: 79px; margin-left: 4px; letter-spacing: -0.2px; }
.p3 { width: 82px; margin-top: -2px; letter-spacing: -0.2px; }
.p5 { margin-left: 17px; }

.history {
    height: 43px;
    flex: none;
    display: flex;
    align-items: center;
    padding-left: 19px;
    border-bottom: 1px solid #dcdcdc;
}

.panel-body {
    flex: 1;
    position: relative;
    padding: 0 16px;
}

.brand {
    display: flex;
    margin-left: 97px;
    gap: 10px;
    font-size: 27px;
    line-height: 32px;
    height: 38px;
    letter-spacing: -0.1px;
}

.slogan {
    width: 337px;
    text-align: center;
    font-size: 14px;
    line-height: 20px;
}

.hi {
    margin: 51px 0 14px;
    font-size: 13.500px;
    line-height: 20px;
    letter-spacing: -0.17px;
}

.card {
    width: 335px;
    height: 44px;
    display: flex;
    align-items: center;
    gap: 12px;
    margin-bottom: 8px;
    border: 1px solid #e2e2e2;
    border-radius: 7px;
    background-color: #fdfdfd;
    font-size: 13.500px;
}

.card svg {
    margin-left: 12px;
}

.card span {
    margin-top: -2px;
}

.c1 { letter-spacing: -0.22px; }
.c2 { letter-spacing: -0.1px; }

.signin {
    width: 337px;
    display: flex;
    margin-top: 65px;
    justify-content: space-between;
}

.signin i {
    width: 20px;
    height: 1px;
    margin-top: 17px;
    background-color: #ccc;
}

.signin p {
    font-size: 13.500px;
    line-height: 20px;
    letter-spacing: -0.13px;
    text-align: center;
    white-space: nowrap;
}

.signin svg {
    display: inline-block;
    vertical-align: -4px;
    margin-right: 8px;
}

.signin a {
    color: #2b4fcf;
}

.ask {
    display: flex;
    margin: 32px 0 0 -2px;
    gap: 11px;
}

.new-chat {
    width: 48px;
    height: 48px;
    display: flex;
    align-items: center;
    justify-content: center;
    border-radius: 50%;
    background-image: linear-gradient(to bottom right, #2a70ee, #1f49f0);
}

.box {
    width: 295px;
    height: 118px;
    border: 1px solid #d5d5d5;
    border-bottom: 2px solid #1d4fd0;
    border-radius: 11px;
    background-color: #fff;
    overflow: hidden;
}

.source {
    height: 32px;
    display: flex;
    align-items: center;
    padding-left: 11px;
    gap: 10px;
    border-bottom: 1px solid #ddd;
    background-color: #f7f7f7;
    font-size: 12px;
    letter-spacing: -0.32px;
}

.source span {
    margin-top: -2px;
}

.source svg:last-child {
    margin-left: -3px;
}

.placeholder {
    margin: 15px 0 0 11px;
    border-left: 1px solid #111;
    font-size: 13.500px;
    line-height: 20px;
    letter-spacing: -0.05px;
    color: #707070;
}

.box-icons {
    display: flex;
    align-items: center;
    margin: 20px 0 0 147px;
}

.box-icons i {
    width: 1px;
    height: 18px;
    margin-left: 13px;
    background-color: #ddd;
}

.b2 { margin-left: 17px; }
.b3 { margin-left: 15px; }
.b4 { margin-left: 21px; }

.panel-thumb {
    position: absolute;
    right: 6px;
    top: 38px;
    width: 4px;
    height: 320px;
    border-radius: 2px;
    background-color: #c2c2c2;
}

/* edge sidebar */
.side {
    flex: 1;
    display: flex;
    flex-direction: column;
    align-items: center;
    padding-top: 42px;
    box-sizing: border-box;
}

.side svg {
    height: 40px;
}

.side hr {
    width: 28px;
    height: 1px;
    margin: 12px 0 25px;
    border: 0;
    background-color: #bdbdbd;
}

.side .plus {
    height: 13px;
}

.side .low {
    margin: 192px 0 13px;
}

.side .gear {
    height: 18px;
}

.mark {
    position: absolute;
    left: 1036px;
    top: 537px;
    overflow: visible;
    font: bold 49px "Liberation Sans", Arial, sans-serif;
    filter: drop-shadow(0 0 1px rgba(0, 0, 0, .12));
}

/* taskbar */
.taskbar {
    height: 40px;
    flex: none;
    display: flex;
    background-image: linear-gradient(to right, #001620, #00101c 60%, #020818);
    color: #fff;
}

.start,
.app {
    width: 48px;
    display: flex;
    align-items: center;
    justify-content: center;
}

.app {
    margin-left: 1px;
}

.view {
    width: 47px;
    margin-right: 1px;
}

.open {
    margin-left: 2px;
    box-sizing: border-box;
    border-bottom: 2px solid #76b9ed;
    background-color: #304650;
    padding-top: 2px;
}

.search {
    width: 288px;
    box-sizing: border-box;
    display: flex;
    align-items: center;
    padding-left: 12px;
    gap: 10px;
    border: 1px solid #ccc;
    border-left: 0;
    background-color: #f0f0f0;
    color: #333;
    font-size: 14px;
}

.tray {
    margin-left: auto;
    width: 209px;
    display: flex;
    align-items: center;
    border-right: 1px solid #667;
    margin-right: 4px;
    box-sizing: border-box;
}

.clock {
    width: 64px;
    text-align: center;
    font-size: 12px;
    line-height: 18px;
    letter-spacing: -0.5px;
}

.note {
    margin-left: 12px;
}
```
